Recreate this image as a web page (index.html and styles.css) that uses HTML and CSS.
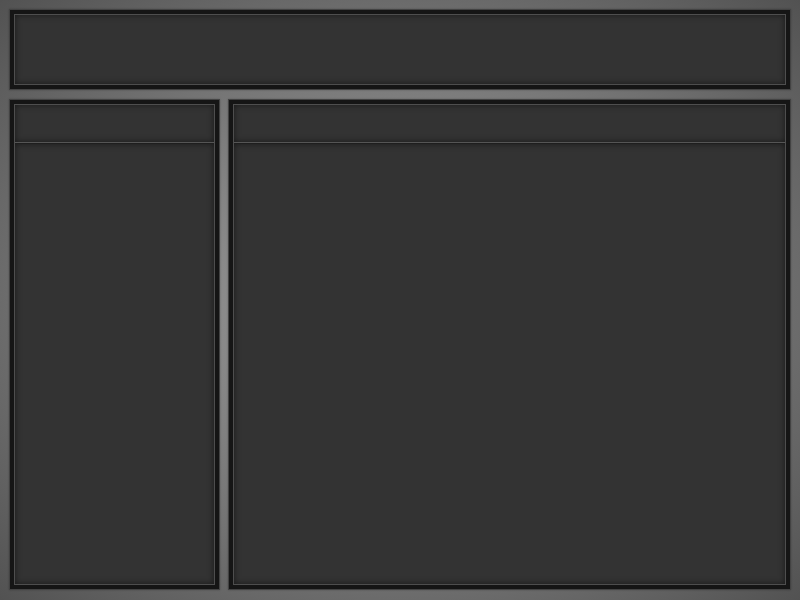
FILE: index.html
```html
<!DOCTYPE html>
<html lang="en">
<head>
<meta charset="utf-8">
<title>Layout</title>
<link rel="stylesheet" href="styles.css">
</head>
<body>
<div class="app">
  <div class="panel top">
    <div class="inner"></div>
  </div>
  <div class="panel side">
    <div class="inner split">
      <div class="head"></div>
      <div class="body"></div>
    </div>
  </div>
  <div class="panel main">
    <div class="inner split">
      <div class="head"></div>
      <div class="body"></div>
    </div>
  </div>
</div>
</body>
</html>
```
FILE: styles.css
```css
html, body {
  margin: 0;
  padding: 0;
  width: 800px;
  height: 600px;
  overflow: hidden;
  font-family: "Liberation Sans", Arial, sans-serif;
}
body {
  background: radial-gradient(ellipse farthest-corner at 50% 50%, #a2a2a2 0%, #747474 60%, #525252 100%);
}
.app {
  box-sizing: border-box;
  width: 800px;
  height: 600px;
  padding: 9px 9px 10px 9px;
  display: grid;
  grid-template-columns: 211px 1fr;
  grid-template-rows: 81px 1fr;
  column-gap: 8px;
  row-gap: 9px;
}
.top {
  grid-column: 1 / 3;
}
.panel {
  box-sizing: border-box;
  border: 1px solid rgba(255, 255, 255, 0.2);
  background: #151515;
  padding: 4px;
  box-shadow: 0 0 2px rgba(0, 0, 0, 0.25);
}
.inner {
  box-sizing: border-box;
  height: 100%;
  border: 1px solid #4e4e4e;
  background: #333333;
  box-shadow: inset 0 0 6px rgba(0, 0, 0, 0.55);
}
.split {
  display: flex;
  flex-direction: column;
  box-shadow: none;
  background: transparent;
}
.head {
  height: 37px;
  flex: none;
  background: #333333;
  box-shadow: inset 0 0 6px rgba(0, 0, 0, 0.55);
  border-bottom: 1px solid #555555;
}
.body {
  flex: 1;
  background: #333333;
  border-top: 1px solid #1e1e1e;
  box-shadow: inset 0 0 6px rgba(0, 0, 0, 0.55);
}
```
